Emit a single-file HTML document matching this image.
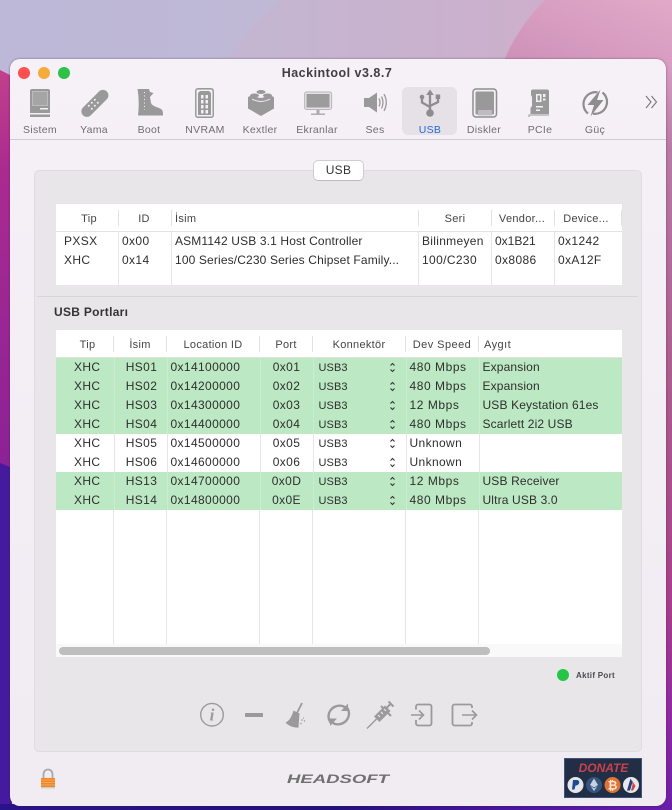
<!DOCTYPE html>
<html><head><meta charset="utf-8">
<style>
html,body{margin:0;padding:0}
body{width:672px;height:810px;position:relative;overflow:hidden;font-family:"Liberation Sans",sans-serif;color:#333}
.a{position:absolute}
#win{position:absolute;left:10px;top:59px;width:656px;height:747px;border-radius:10px;background:linear-gradient(#f6f0f7,#f0ecf2);box-shadow:0 0 2px rgba(60,30,70,.55)}
.tl{position:absolute;top:67px;width:12px;height:12px;border-radius:50%}
.lbl{position:absolute;top:123px;width:70px;text-align:center;font-size:10.5px;line-height:14px;color:#6f6d70;letter-spacing:.3px}
.sep{position:absolute;width:1px}
table{position:absolute;border-collapse:collapse;table-layout:fixed;font-size:12px;letter-spacing:.37px;color:#2e2e2e}
td{padding:0 0 0 4px;height:19px;line-height:19px;white-space:nowrap;overflow:hidden}
td.c{text-align:center;padding:0}
td.c1{text-align:center;padding:0 0 0 5px}
td.c2{text-align:center;padding:0 0 0 2px}
td.p{padding-left:3px}
td.n{letter-spacing:.14px}
td.s{letter-spacing:.55px;padding-left:3px}
td.k{letter-spacing:.37px;padding-left:3px}
tr.g{background:#bce9c3}
tr.g td{border-right:1px solid #c9edcf}
tr.w td{border-right:1px solid #e6e6e6}
td:last-child{border-right:0!important}
td.u{font-size:11px;letter-spacing:.1px;padding-left:5px}
td.u span{position:relative;top:1px}
.h{position:absolute;font-size:11px;line-height:14px;color:#444;letter-spacing:.3px;text-align:center}
svg{position:absolute;overflow:visible}
</style></head>
<body>
<svg class="a" style="left:0;top:0" width="672" height="810" viewBox="0 0 672 810">
<defs>
<linearGradient id="sky" x1="0" y1="0" x2="1" y2="0"><stop offset="0" stop-color="#bdb8d8"/><stop offset=".4" stop-color="#bfb9d5"/><stop offset=".8" stop-color="#ccb0cc"/><stop offset="1" stop-color="#ccb0cc"/></linearGradient>
<linearGradient id="pk" x1="0" y1="1" x2="1" y2="0"><stop offset="0" stop-color="#cc8fb8"/><stop offset="1" stop-color="#e2a9c8"/></linearGradient>
<linearGradient id="rt" x1="0" y1="0" x2="0" y2="1"><stop offset="0" stop-color="#d9a0c2"/><stop offset=".12" stop-color="#b87aa4"/><stop offset=".45" stop-color="#ab5a8c"/><stop offset=".72" stop-color="#a83f8a"/><stop offset=".88" stop-color="#8f28a2"/><stop offset="1" stop-color="#6a1ea8"/></linearGradient>
<linearGradient id="lf" x1="0" y1="0" x2="0" y2="1"><stop offset="0" stop-color="#c2408c"/><stop offset=".25" stop-color="#aa2b90"/><stop offset="1" stop-color="#8a2296"/></linearGradient>
<linearGradient id="bt" x1="0" y1="0" x2="1" y2="0"><stop offset="0" stop-color="#2a1388"/><stop offset=".5" stop-color="#24107c"/><stop offset=".75" stop-color="#4a169a"/><stop offset="1" stop-color="#6a1ea8"/></linearGradient>
</defs>
<rect width="672" height="90" fill="url(#sky)"/>
<path d="M222 70Q245 30 280 0H672V70Z" fill="#cdb0cc" opacity=".35"/>
<path d="M500 70Q515 30 545 0H672V70Z" fill="url(#pk)"/>
<rect y="60" x="660" width="12" height="750" fill="url(#rt)"/>
<path d="M0 70L12 76V470H0Z" fill="url(#lf)"/>
<path d="M0 463L12 468V810H0Z" fill="#451a9e"/>
<rect y="804" width="672" height="6" fill="url(#bt)"/>
</svg>

<div id="win"></div>
<div class="tl" style="left:18px;background:#fb5050"></div>
<div class="tl" style="left:38px;background:#f6ab3c"></div>
<div class="tl" style="left:58px;background:#2ec148"></div>
<div class="a" style="left:237px;width:200px;top:66px;text-align:center;font-weight:bold;font-size:12.5px;line-height:15px;color:#403e42;letter-spacing:.5px">Hackintool v3.8.7</div>

<div class="a" style="left:402px;top:87px;width:55px;height:48px;border-radius:6px;background:#e6e1e7"></div>
<div class="a" style="left:10px;top:139px;width:656px;height:1px;background:#cfcbd1"></div>

<svg style="left:0;top:0" width="672" height="140" fill="#999">
<!-- Sistem -->
<path d="M32 89H48a2 2 0 0 1 2 2V113H30V91a2 2 0 0 1 2-2Z"/><rect x="32.500" y="91.500" width="15" height="14" fill="#a5a5a5" stroke="#c4c4c4" stroke-width=".8"/><rect x="30" y="114.500" width="20" height="2.500"/><rect x="40" y="108" width="8" height="1.500" fill="#f5eff6"/>
<!-- Yama -->
<path d="M83 107.500L99 91.500a5.500 5.500 0 0 1 7.800 7.800L90.800 115.300a5.500 5.500 0 0 1-7.800-7.800Z"/><g fill="#f5eff6"><circle cx="94.800" cy="99.800" r="1"/><circle cx="91.800" cy="102.800" r="1"/><circle cx="97.800" cy="102.800" r="1"/><circle cx="94.800" cy="105.800" r="1"/><circle cx="91.800" cy="108.800" r="1"/><circle cx="88.800" cy="105.800" r="1"/></g>
<!-- Boot -->
<path d="M137.500 89H149L150 92L153.500 93L150 97L151 103C153 107 158 107 161 109C163 110.500 163 112 163 115.500H138C139 108 139 97 137.500 89Z"/><path d="M144.500 92V110" stroke="#f5eff6" stroke-width="1" stroke-dasharray="1 2.500" fill="none"/>
<!-- NVRAM -->
<rect x="195.800" y="88.800" width="17.400" height="28.400" rx="2" fill="none" stroke="#8e8e8e" stroke-width="1.300"/><path d="M198 93L200 91H209L211 93V115H198Z"/><g fill="#f5eff6"><rect x="201" y="95" width="2.500" height="3.500"/><rect x="205.500" y="95" width="2.500" height="3.500"/><rect x="201" y="100" width="2.500" height="3.500"/><rect x="205.500" y="100" width="2.500" height="3.500"/><rect x="201" y="105" width="2.500" height="3.500"/><rect x="205.500" y="105" width="2.500" height="3.500"/><rect x="201" y="110" width="2.500" height="3.500"/><rect x="205.500" y="110" width="2.500" height="3.500"/></g>
<!-- Kextler -->
<path d="M248 97L254 94.500C256 99 265 99 267.500 94.500L274 97V108.500L261 116L248 108.500Z"/><ellipse cx="254.500" cy="95.500" rx="4.500" ry="2"/><ellipse cx="261" cy="92" rx="4.500" ry="2"/><ellipse cx="267.500" cy="95.500" rx="4.500" ry="2"/><path d="M252 99Q261 104 270 99" stroke="#f5eff6" fill="none"/>
<!-- Ekranlar -->
<rect x="304.600" y="92" width="27" height="17.500" rx="2" fill="#e4e2e5" stroke="#b8b6b9"/><rect x="306.500" y="94" width="23" height="13.500" fill="#9c9c9c"/><rect x="316.500" y="110" width="3" height="3.500" fill="#aaa"/><rect x="311" y="113.500" width="14" height="1.400" fill="#aaa"/>
<!-- Ses -->
<path d="M364 98H369L377 92.500V112.500L369 107H364Z" fill="#999"/><g fill="none" stroke="#999" stroke-width="1.300"><path d="M379 98.500Q381 102.500 379 106.500"/><path d="M381.500 96.500Q384.500 102.500 381.500 108.500"/><path d="M384 94Q388.500 102.500 384 111"/></g>
<!-- USB -->
<g fill="none" stroke="#8d8d8d" stroke-width="2.300"><path d="M430 92.500V112"/><path d="M422 98V102.500L430 107"/><path d="M438 98V102L430 106"/></g><path d="M430 89.500L433.800 95H426.200Z" fill="#8d8d8d"/><circle cx="430" cy="113" r="3.800" fill="#8d8d8d"/><circle cx="422" cy="97" r="2.300" fill="#8d8d8d"/><rect x="435.700" y="94.500" width="4.500" height="4.500" fill="#8d8d8d"/>
<!-- Diskler -->
<rect x="473" y="89" width="23.500" height="28" rx="3" fill="none" stroke="#8e8e8e" stroke-width="1.500"/><rect x="475.500" y="91.500" width="18.500" height="23" rx="1"/><rect x="478" y="110" width="14" height="5.500" fill="#f5eff6"/><path d="M479 110V115.500M481 110V115.500M483 110V115.500M485 110V115.500M487 110V115.500M489 110V115.500M491 110V115.500" stroke="#888" stroke-width="1"/>
<!-- PCIe -->
<path fill-rule="evenodd" d="M533 89.500H547a2 2 0 0 1 2 2V114H530.500V108L532 106V97L531 95V91.500a2 2 0 0 1 2-2Z"/><rect x="536" y="94" width="5.500" height="8" fill="#f5eff6"/><rect x="537.500" y="95.500" width="2.500" height="5"/><rect x="543" y="94" width="2.500" height="3" fill="#f5eff6"/><rect x="543" y="98.500" width="2.500" height="2" fill="#f5eff6"/><rect x="536" y="106" width="7" height="1.500" fill="#f5eff6"/><rect x="536" y="109.500" width="4" height="1.500" fill="#f5eff6"/><path d="M529 117V115H549" fill="none" stroke="#999" stroke-width="1"/>
<!-- Guc -->
<g fill="none" stroke="#8d8d8d" stroke-width="2.200"><path d="M597.500 92.300A12 12 0 0 0 588 113.500"/><path d="M593 113.700A12 12 0 0 0 602.500 92.500"/></g><path d="M600.500 89.500L587.500 105H594L590.500 116.500L603.500 100H597Z" fill="#8d8d8d"/>
<!-- more -->
<path d="M646 96L651 102L646 108M651.500 96L656.500 102L651.500 108" fill="none" stroke="#777" stroke-width="1.100"/>
</svg>

<div class="lbl" style="left:5px">Sistem</div>
<div class="lbl" style="left:59px">Yama</div>
<div class="lbl" style="left:114px">Boot</div>
<div class="lbl" style="left:170px">NVRAM</div>
<div class="lbl" style="left:225px">Kextler</div>
<div class="lbl" style="left:282px">Ekranlar</div>
<div class="lbl" style="left:340px">Ses</div>
<div class="lbl" style="left:395px;color:#1f69d9">USB</div>
<div class="lbl" style="left:449px">Diskler</div>
<div class="lbl" style="left:505px">PCIe</div>
<div class="lbl" style="left:560px">Güç</div>

<!-- panel -->
<div class="a" style="left:34px;top:170px;width:606px;height:580px;background:#e9e6ea;border:1px solid #dfdce0;border-radius:5px"></div>
<div class="a" style="left:313px;top:160px;width:49px;height:19px;background:#fff;border:1px solid #cfcdd0;border-bottom-color:#bdbbbe;border-radius:5px;text-align:center;font-size:12px;line-height:19px;color:#333;letter-spacing:.3px">USB</div>

<!-- table 1 -->
<div class="a" style="left:56px;top:204px;width:566px;height:81px;background:#fff"></div>
<div class="a" style="left:56px;top:231px;width:566px;height:1px;background:#e3e3e3"></div>
<div class="sep" style="left:118px;top:210px;height:16px;background:#e2e2e2"></div>
<div class="sep" style="left:171px;top:210px;height:16px;background:#e2e2e2"></div>
<div class="sep" style="left:418px;top:210px;height:16px;background:#e2e2e2"></div>
<div class="sep" style="left:491px;top:210px;height:16px;background:#e2e2e2"></div>
<div class="sep" style="left:554px;top:210px;height:16px;background:#e2e2e2"></div>
<div class="sep" style="left:621px;top:210px;height:16px;background:#e2e2e2"></div>
<div class="sep" style="left:118px;top:232px;height:53px;background:#e6e6e6"></div>
<div class="sep" style="left:171px;top:232px;height:53px;background:#e6e6e6"></div>
<div class="sep" style="left:418px;top:232px;height:53px;background:#e6e6e6"></div>
<div class="sep" style="left:491px;top:232px;height:53px;background:#e6e6e6"></div>
<div class="sep" style="left:554px;top:232px;height:53px;background:#e6e6e6"></div>
<div class="h" style="left:58px;width:62px;top:212px">Tip</div>
<div class="h" style="left:118px;width:52px;top:212px">ID</div>
<div class="h" style="left:175px;top:212px">İsim</div>
<div class="h" style="left:419px;width:72px;top:212px">Seri</div>
<div class="h" style="left:491px;width:62px;top:212px">Vendor...</div>
<div class="h" style="left:553px;width:66px;top:212px">Device...</div>
<table style="left:56px;top:232px;width:566px"><colgroup><col style="width:62px"><col style="width:53px"><col style="width:247px"><col style="width:73px"><col style="width:63px"><col style="width:68px"></colgroup>
<tr><td style="padding-left:8px">PXSX</td><td>0x00</td><td class="n">ASM1142 USB 3.1 Host Controller</td><td style="letter-spacing:.3px">Bilinmeyen</td><td style="letter-spacing:0">0x1B21</td><td>0x1242</td></tr>
<tr><td style="padding-left:8px">XHC</td><td>0x14</td><td class="n">100 Series/C230 Series Chipset Family...</td><td>100/C230</td><td>0x8086</td><td>0xA12F</td></tr>
</table>

<div class="a" style="left:37px;top:296px;width:601px;height:1px;background:#d8d5d9"></div>
<div class="a" style="left:54px;top:305px;font-size:12px;font-weight:bold;line-height:15px;color:#333;letter-spacing:.3px">USB Portları</div>

<!-- table 2 -->
<div class="a" style="left:56px;top:330px;width:566px;height:327px;background:#fff"></div>
<div class="a" style="left:56px;top:357px;width:566px;height:1px;background:#e3e3e3"></div>
<div class="sep" style="left:113px;top:336px;height:16px;background:#e2e2e2"></div>
<div class="sep" style="left:166px;top:336px;height:16px;background:#e2e2e2"></div>
<div class="sep" style="left:259px;top:336px;height:16px;background:#e2e2e2"></div>
<div class="sep" style="left:312px;top:336px;height:16px;background:#e2e2e2"></div>
<div class="sep" style="left:405px;top:336px;height:16px;background:#e2e2e2"></div>
<div class="sep" style="left:478px;top:336px;height:16px;background:#e2e2e2"></div>
<div class="sep" style="left:113px;top:510px;height:134px;background:#e6e6e6"></div>
<div class="sep" style="left:166px;top:510px;height:134px;background:#e6e6e6"></div>
<div class="sep" style="left:259px;top:510px;height:134px;background:#e6e6e6"></div>
<div class="sep" style="left:312px;top:510px;height:134px;background:#e6e6e6"></div>
<div class="sep" style="left:405px;top:510px;height:134px;background:#e6e6e6"></div>
<div class="sep" style="left:478px;top:510px;height:134px;background:#e6e6e6"></div>
<div class="h" style="left:59px;width:57px;top:338px">Tip</div>
<div class="h" style="left:114px;width:52px;top:338px">İsim</div>
<div class="h" style="left:167px;width:92px;top:338px">Location ID</div>
<div class="h" style="left:260px;width:52px;top:338px">Port</div>
<div class="h" style="left:313px;width:92px;top:338px">Konnektör</div>
<div class="h" style="left:406px;width:72px;top:338px;letter-spacing:.45px">Dev Speed</div>
<div class="h" style="left:484px;top:338px;letter-spacing:.45px">Aygıt</div>
<table style="left:56px;top:358px;width:566px"><colgroup><col style="width:58px"><col style="width:53px"><col style="width:93px"><col style="width:53px"><col style="width:93px"><col style="width:73px"><col style="width:143px"></colgroup>
<tr class="g"><td class="c1">XHC</td><td class="c2">HS01</td><td class="p">0x14100000</td><td class="c">0x01</td><td class="u"><span>USB3</span></td><td class="s">480 Mbps</td><td class="p n">Expansion</td></tr>
<tr class="g"><td class="c1">XHC</td><td class="c2">HS02</td><td class="p">0x14200000</td><td class="c">0x02</td><td class="u"><span>USB3</span></td><td class="s">480 Mbps</td><td class="p n">Expansion</td></tr>
<tr class="g"><td class="c1">XHC</td><td class="c2">HS03</td><td class="p">0x14300000</td><td class="c">0x03</td><td class="u"><span>USB3</span></td><td class="s">12 Mbps</td><td class="p n">USB Keystation 61es</td></tr>
<tr class="g"><td class="c1">XHC</td><td class="c2">HS04</td><td class="p">0x14400000</td><td class="c">0x04</td><td class="u"><span>USB3</span></td><td class="s">480 Mbps</td><td class="p n">Scarlett 2i2 USB</td></tr>
<tr class="w"><td class="c1">XHC</td><td class="c2">HS05</td><td class="p">0x14500000</td><td class="c">0x05</td><td class="u"><span>USB3</span></td><td class="k">Unknown</td><td></td></tr>
<tr class="w"><td class="c1">XHC</td><td class="c2">HS06</td><td class="p">0x14600000</td><td class="c">0x06</td><td class="u"><span>USB3</span></td><td class="k">Unknown</td><td></td></tr>
<tr class="g"><td class="c1">XHC</td><td class="c2">HS13</td><td class="p">0x14700000</td><td class="c">0x0D</td><td class="u"><span>USB3</span></td><td class="s">12 Mbps</td><td class="p n">USB Receiver</td></tr>
<tr class="g"><td class="c1">XHC</td><td class="c2">HS14</td><td class="p">0x14800000</td><td class="c">0x0E</td><td class="u"><span>USB3</span></td><td class="s">480 Mbps</td><td class="p n">Ultra USB 3.0</td></tr>
</table>
<svg style="left:0;top:0" width="672" height="520" fill="none" stroke="#333" stroke-width="1.100">
<path d="M390.500 365.500L392.500 363.500L394.500 365.500M390.500 369.500L392.500 371.500L394.500 369.500"/>
<path d="M390.500 384.500L392.500 382.500L394.500 384.500M390.500 388.500L392.500 390.500L394.500 388.500"/>
<path d="M390.500 403.500L392.500 401.500L394.500 403.500M390.500 407.500L392.500 409.500L394.500 407.500"/>
<path d="M390.500 422.500L392.500 420.500L394.500 422.500M390.500 426.500L392.500 428.500L394.500 426.500"/>
<path d="M390.500 441.500L392.500 439.500L394.500 441.500M390.500 445.500L392.500 447.500L394.500 445.500"/>
<path d="M390.500 460.500L392.500 458.500L394.500 460.500M390.500 464.500L392.500 466.500L394.500 464.500"/>
<path d="M390.500 479.500L392.500 477.500L394.500 479.500M390.500 483.500L392.500 485.500L394.500 483.500"/>
<path d="M390.500 498.500L392.500 496.500L394.500 498.500M390.500 502.500L392.500 504.500L394.500 502.500"/>
</svg>
<div class="a" style="left:56px;top:644px;width:566px;height:13px;background:#f9f9f9"></div>
<div class="a" style="left:59px;top:647px;width:431px;height:8px;border-radius:4px;background:#bebebe"></div>

<!-- legend -->
<div class="a" style="left:557px;top:669px;width:12px;height:12px;border-radius:50%;background:#27c545"></div>
<div class="a" style="left:576px;top:670px;font-size:8px;font-weight:bold;line-height:12px;color:#4a4a4c;letter-spacing:.3px">Aktif Port</div>

<!-- bottom icons -->
<svg style="left:0;top:0" width="672" height="810" fill="none" stroke="#9a9a9a">
<circle cx="212" cy="714.700" r="11.300" stroke-width="1.400"/>
<text x="212" y="720.500" text-anchor="middle" font-family="Liberation Serif,serif" font-style="italic" font-weight="bold" font-size="17" fill="#9a9a9a" stroke="none">i</text>
<rect x="245" y="713" width="18" height="4" rx=".5" fill="#9a9a9a" stroke="none"/>
<path d="M302 703L297 713" stroke-width="1.800"/>
<path d="M293.500 710.500L299.500 713.500L298.500 727.500C295 728 289 726.500 285.500 722.500C289.500 721 292 716 293.500 710.500Z" fill="#9a9a9a" stroke="none"/>
<g fill="#9a9a9a" stroke="none"><circle cx="302" cy="720" r=".8"/><circle cx="304.500" cy="721" r=".7"/><circle cx="301" cy="723.500" r=".8"/><circle cx="303.500" cy="718" r=".6"/></g>
<path d="M345.500 707.500A11 11 0 0 0 328.500 716A11 11 0 0 0 331 723" stroke-width="2.400"/>
<path d="M332 722.500A11 11 0 0 0 349 714A11 11 0 0 0 346.500 707" stroke-width="2.400"/>
<path d="M348 703.500V711H341Z" fill="#9a9a9a" stroke="none"/>
<path d="M330 726V718.500H337Z" fill="#9a9a9a" stroke="none"/>
<path d="M367 728.500L376.500 719" stroke-width="1.300"/>
<path d="M374 716.500L385 705.500L390.500 711L379.500 722Z" fill="#9a9a9a" stroke="none"/>
<path d="M381 706L391 716M387 707.500L391 703.500M388.500 701.500L393.500 706.500" stroke-width="2"/>
<path d="M378 715L380 717M381 712L383 714M384 709L386 711" stroke="#e9e6ea" stroke-width="1.200"/>
<path d="M416 709.500V706.500a2 2 0 0 1 2-2H429.500a2 2 0 0 1 2 2V723.500a2 2 0 0 1-2 2H418a2 2 0 0 1-2-2V720" stroke-width="1.800"/>
<path d="M411 715H423.500M419 710.500L423.500 715L419 719.500" stroke-width="1.600"/>
<path d="M472 708V706.500a2 2 0 0 0-2-2H454.500a2 2 0 0 0-2 2V723.500a2 2 0 0 0 2 2H470a2 2 0 0 0 2-2V722" stroke-width="1.800"/>
<path d="M462 715H476M472 710.500L476.500 715L472 719.500" stroke-width="1.600"/>
</svg>

<!-- lock -->
<svg style="left:0;top:0" width="100" height="810">
<path d="M43.500 778V774a4.500 4.500 0 0 1 9 0V778" fill="none" stroke="#a8a8ac" stroke-width="1.800"/>
<rect x="41" y="778" width="14" height="9" fill="#ef872a"/>
<path d="M41 780H55M41 782.500H55M41 785H55" stroke="#f8b862" stroke-width=".8"/>
<rect x="41" y="787" width="14" height="1.500" fill="#cfcbd2"/>
</svg>

<!-- headsoft -->
<svg style="left:0;top:0" width="672" height="810">
<text x="287" y="783" textLength="102" lengthAdjust="spacingAndGlyphs" font-family="Liberation Sans,sans-serif" font-style="italic" font-weight="bold" font-size="11.500" fill="#707070">HEADSOFT</text>
</svg>

<!-- donate -->
<div class="a" style="left:564px;top:758px;width:76px;height:38px;background:#222e45;border:1px solid #3e5478"></div>
<svg style="left:0;top:0" width="672" height="810">
<text x="603.500" y="772" text-anchor="middle" font-family="Liberation Sans,sans-serif" font-style="italic" font-weight="bold" font-size="12" fill="#c8434b">DONATE</text>
<circle cx="575.500" cy="785" r="8" fill="#e4e6ea"/><path d="M573 780H577.500Q580 781 579 783.500Q578 785.500 575.500 785.500L574.500 789.500H572Z" fill="#1f4a92"/>
<circle cx="594" cy="785" r="8" fill="#35557f"/><path d="M594 778.500L598 785L594 787.500L590 785ZM590.500 786L594 788.500L597.500 786L594 791Z" fill="#c7d2e0"/>
<circle cx="612.500" cy="785" r="8" fill="#de7433"/><text x="612.500" y="789.500" text-anchor="middle" font-family="Liberation Sans,sans-serif" font-weight="bold" font-size="12" fill="#fbe8da">₿</text>
<circle cx="631" cy="785" r="8" fill="#e6e7ea"/><path d="M627 790.500L630.500 778.500L632.500 782L630 790.500Z" fill="#213e7e"/><path d="M632 780.500L635.500 786L633 790.500L631 790.500L632.500 785Z" fill="#d2403f"/>
</svg>
</body></html>
